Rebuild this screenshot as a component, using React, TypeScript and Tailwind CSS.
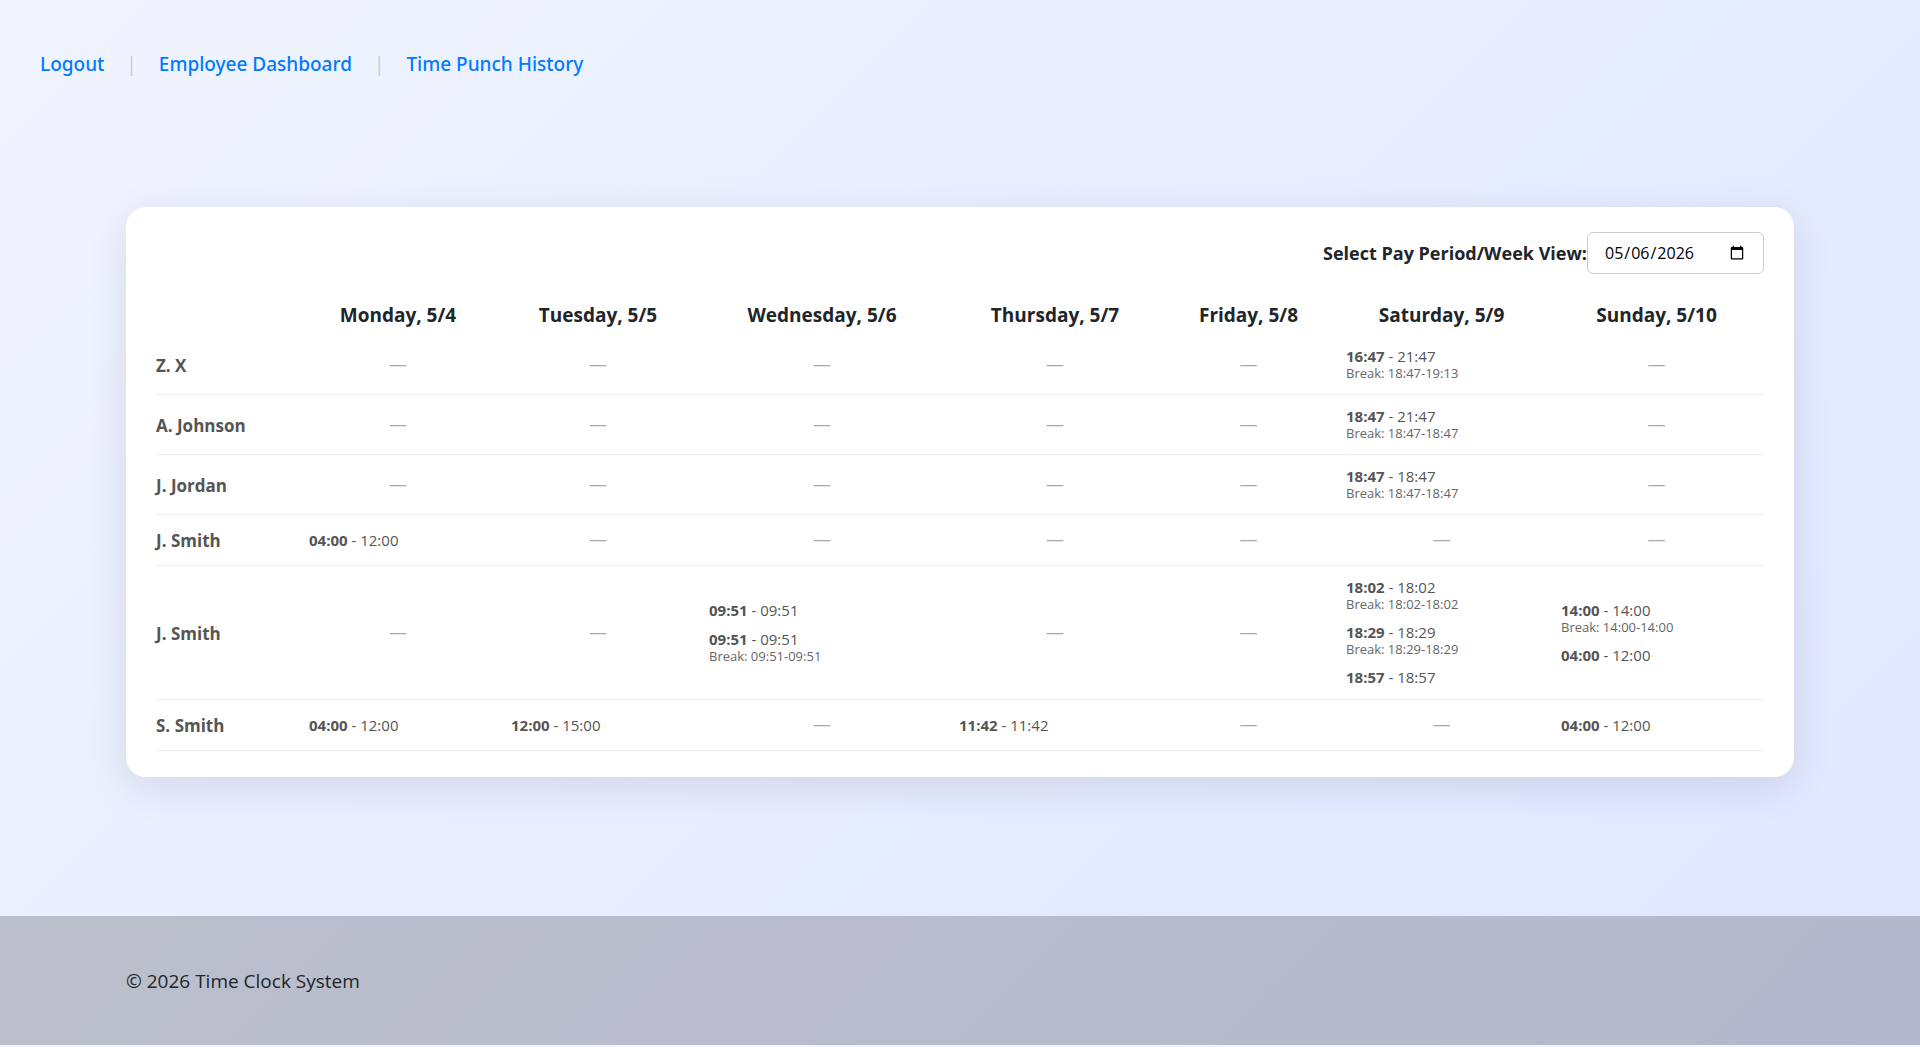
import { Fragment, useState } from "react";

type Shift = { start: string; end: string; rest?: string };
type Employee = { name: string; week: Shift[][] };

const days = [
  "Monday, 5/4",
  "Tuesday, 5/5",
  "Wednesday, 5/6",
  "Thursday, 5/7",
  "Friday, 5/8",
  "Saturday, 5/9",
  "Sunday, 5/10",
];

const links = ["Logout", "Employee Dashboard", "Time Punch History"];

const employees: Employee[] = [
  { name: "Z. X", week: [[], [], [], [], [], [{ start: "16:47", end: "21:47", rest: "18:47-19:13" }], []] },
  { name: "A. Johnson", week: [[], [], [], [], [], [{ start: "18:47", end: "21:47", rest: "18:47-18:47" }], []] },
  { name: "J. Jordan", week: [[], [], [], [], [], [{ start: "18:47", end: "18:47", rest: "18:47-18:47" }], []] },
  { name: "J. Smith", week: [[{ start: "04:00", end: "12:00" }], [], [], [], [], [], []] },
  {
    name: "J. Smith",
    week: [
      [],
      [],
      [
        { start: "09:51", end: "09:51" },
        { start: "09:51", end: "09:51", rest: "09:51-09:51" },
      ],
      [],
      [],
      [
        { start: "18:02", end: "18:02", rest: "18:02-18:02" },
        { start: "18:29", end: "18:29", rest: "18:29-18:29" },
        { start: "18:57", end: "18:57" },
      ],
      [
        { start: "14:00", end: "14:00", rest: "14:00-14:00" },
        { start: "04:00", end: "12:00" },
      ],
    ],
  },
  {
    name: "S. Smith",
    week: [
      [{ start: "04:00", end: "12:00" }],
      [{ start: "12:00", end: "15:00" }],
      [],
      [{ start: "11:42", end: "11:42" }],
      [],
      [],
      [{ start: "04:00", end: "12:00" }],
    ],
  },
];

function DayCell({ shifts }: { shifts: Shift[] }) {
  if (shifts.length === 0) {
    return <td className="px-3 pt-3 pb-[13px] text-center text-lg leading-[25px] text-[#aaa]">—</td>;
  }
  return (
    <td className="px-3 pt-3 pb-[13px]">
      <div className="flex flex-col gap-[11px] text-[#555]">
        {shifts.map((s, i) => (
          <div key={i}>
            <div className="text-[15px] leading-[18px]">
              <strong className="font-bold">{s.start}</strong> - {s.end}
            </div>
            {s.rest && <div className="text-[13px] leading-4 text-[#666]">Break: {s.rest}</div>}
          </div>
        ))}
      </div>
    </td>
  );
}

export default function App() {
  const [date, setDate] = useState("2026-05-06");

  return (
    <div className="min-h-screen bg-[#f0f4ff] font-['Open_Sans','Noto_Sans',sans-serif] text-[#212529]">
      <div className="bg-linear-135 from-[#f0f4ff] to-[#e0e7ff]">
        <nav className="flex items-center gap-[22px] px-10 pt-[50px] pb-[50px] font-['Noto_Sans','Open_Sans',sans-serif] text-[19px] leading-7">
          {links.map((label, i) => (
            <Fragment key={label}>
              {i > 0 && <span className="text-[#ccc]">|</span>}
              <a href="#" className="font-medium text-[#007bff]">
                {label}
              </a>
            </Fragment>
          ))}
        </nav>

        <main className="px-[126px] pt-[79px] pb-[139px]">
          <section className="rounded-[20px] bg-white px-[30px] pt-[25px] pb-[26px] shadow-[0_10px_40px_rgba(0,0,0,0.1)]">
            <div className="mb-5 flex items-center justify-end">
              <label htmlFor="week" className="text-lg font-bold">
                Select Pay Period/Week View:
              </label>
              <input
                id="week"
                type="date"
                value={date}
                onChange={(e) => setDate(e.target.value)}
                className="h-[42px] w-[177px] rounded-md border border-[#ccc] bg-white px-4 text-base text-black"
              />
            </div>

            <table className="w-full table-fixed border-collapse">
              <colgroup>
                <col className="w-[141px]" />
                <col className="w-[202px]" />
                <col className="w-[198px]" />
                <col className="w-[250px]" />
                <col className="w-[216px]" />
                <col className="w-[171px]" />
                <col className="w-[215px]" />
                <col className="w-[215px]" />
              </colgroup>
              <thead>
                <tr className="h-[41px]">
                  <td />
                  {days.map((d) => (
                    <th key={d} scope="col" className="text-center text-[19px] leading-7 font-bold">
                      {d}
                    </th>
                  ))}
                </tr>
              </thead>
              <tbody>
                {employees.map((e, i) => (
                  <tr key={i} className="border-b border-[#eee]">
                    <th scope="row" className="pt-[13px] pb-3 text-left text-[17px] leading-[25px] font-bold text-[#555]">
                      {e.name}
                    </th>
                    {e.week.map((shifts, j) => (
                      <DayCell key={j} shifts={shifts} />
                    ))}
                  </tr>
                ))}
              </tbody>
            </table>
          </section>
        </main>

        <footer className="bg-black/20 px-[126px] pt-[51px] pb-[49px]">
          <p className="text-[19px] leading-[29px]">© 2026 Time Clock System</p>
        </footer>
      </div>
    </div>
  );
}
